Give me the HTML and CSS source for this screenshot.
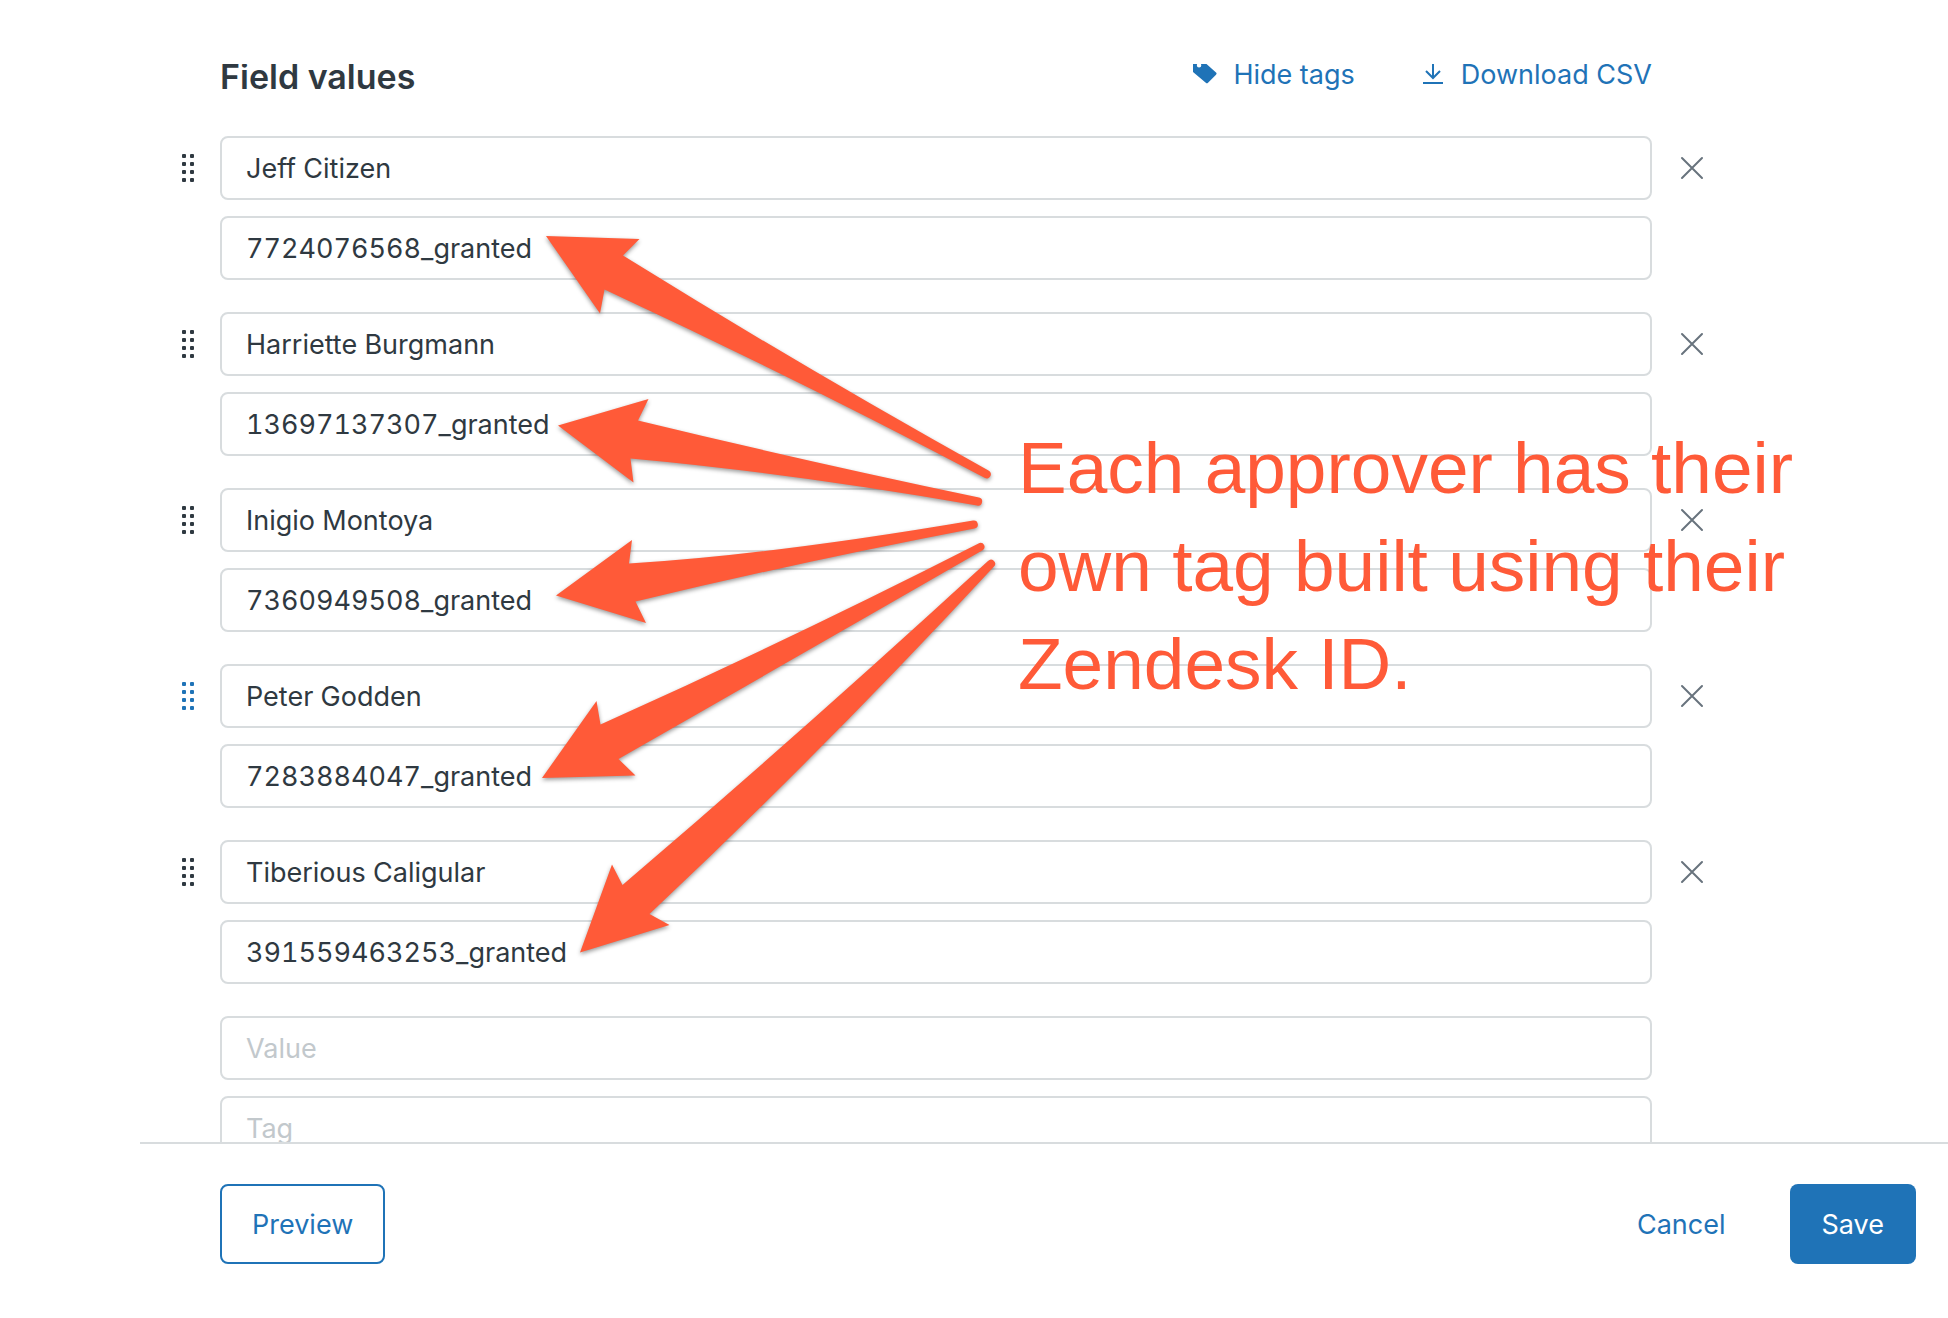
FILE: index.html
```html
<!DOCTYPE html>
<html lang="en">
<head>
    <meta charset="UTF-8">
    <meta name="viewport" content="width=device-width, initial-scale=1.0">
    <title>Field values</title>
    <link rel="stylesheet" href="styles.css">
</head>
<body>

    <!-- Shared icons -->
    <svg class="sprite" aria-hidden="true">
        <symbol id="grip" viewBox="0 0 12 28">
            <rect x="0" y="0" width="4" height="4" rx="1"/><rect x="8" y="0" width="4" height="4" rx="1"/>
            <rect x="0" y="8" width="4" height="4" rx="1"/><rect x="8" y="8" width="4" height="4" rx="1"/>
            <rect x="0" y="16" width="4" height="4" rx="1"/><rect x="8" y="16" width="4" height="4" rx="1"/>
            <rect x="0" y="24" width="4" height="4" rx="1"/><rect x="8" y="24" width="4" height="4" rx="1"/>
        </symbol>
        <symbol id="cross" viewBox="0 0 24 24">
            <path d="M2 2l20 20M22 2L2 22" fill="none" stroke="currentColor" stroke-width="2" stroke-linecap="round"/>
        </symbol>
    </svg>

    <main class="fields">
        <div class="fields-header">
            <h1>Field values</h1>
            <div class="actions">
                <a href="#">
                    <svg width="24" height="22" viewBox="0 0 24 22"><path fill="currentColor" fill-rule="evenodd" d="M0 0h13.500l9.500 8.500a1.500 1.500 0 0 1 0 2.200l-8 8a1.500 1.500 0 0 1-2.200 0L0 8zM6 -.8a2.200 2.200 0 1 0 .1 4.400 2.200 2.200 0 0 0-.1-4.400z"/></svg>
                    Hide tags
                </a>
                <a href="#">
                    <svg width="22" height="22" viewBox="0 0 22 22"><path fill="none" stroke="currentColor" stroke-width="2" d="M10 0v14M3 7l7 7 7-7M0 19h20"/></svg>
                    Download CSV
                </a>
            </div>
        </div>

        <div class="field">
            <button class="grip" aria-label="Reorder"><svg width="12" height="28"><use href="#grip"/></svg></button>
            <input type="text" aria-label="Value" value="Jeff Citizen">
            <button class="remove" aria-label="Remove"><svg width="24" height="24"><use href="#cross"/></svg></button>
            <input type="text" class="tag" aria-label="Tag" value="7724076568_granted">
        </div>

        <div class="field">
            <button class="grip" aria-label="Reorder"><svg width="12" height="28"><use href="#grip"/></svg></button>
            <input type="text" aria-label="Value" value="Harriette Burgmann">
            <button class="remove" aria-label="Remove"><svg width="24" height="24"><use href="#cross"/></svg></button>
            <input type="text" class="tag" aria-label="Tag" value="13697137307_granted">
        </div>

        <div class="field">
            <button class="grip" aria-label="Reorder"><svg width="12" height="28"><use href="#grip"/></svg></button>
            <input type="text" aria-label="Value" value="Inigio Montoya">
            <button class="remove" aria-label="Remove"><svg width="24" height="24"><use href="#cross"/></svg></button>
            <input type="text" class="tag" aria-label="Tag" value="7360949508_granted">
        </div>

        <div class="field">
            <button class="grip active" aria-label="Reorder"><svg width="12" height="28"><use href="#grip"/></svg></button>
            <input type="text" aria-label="Value" value="Peter Godden">
            <button class="remove" aria-label="Remove"><svg width="24" height="24"><use href="#cross"/></svg></button>
            <input type="text" class="tag" aria-label="Tag" value="7283884047_granted">
        </div>

        <div class="field">
            <button class="grip" aria-label="Reorder"><svg width="12" height="28"><use href="#grip"/></svg></button>
            <input type="text" aria-label="Value" value="Tiberious Caligular">
            <button class="remove" aria-label="Remove"><svg width="24" height="24"><use href="#cross"/></svg></button>
            <input type="text" class="tag" aria-label="Tag" value="391559463253_granted">
        </div>

        <div class="field">
            <input type="text" class="value" aria-label="Value" placeholder="Value">
            <input type="text" class="tag" aria-label="Tag" placeholder="Tag">
        </div>
    </main>

    <footer>
        <button class="btn btn-outline">Preview</button>
        <button class="btn btn-link">Cancel</button>
        <button class="btn btn-primary">Save</button>
    </footer>

    <!-- Callout over the form -->
    <svg class="arrows" width="500" height="760" viewBox="520 210 500 760" aria-hidden="true">
        <path d="M546 236L639.500 239L623 255.500Q806 369 988.500 470.500A4 4 0 0 1 985 478Q795 378 604.500 289.500L600 313.500Z"/>
        <path d="M558 425.500L648.500 399L638 420.500Q805 461 979 497.500A4 4 0 0 1 977 505.500Q790 473 630.500 458.500L633.500 482.500Z"/>
        <path d="M556 595.500L632 540L629 563.500Q770 555 973 520.500A4 4 0 0 1 974.500 528.500Q800 562 635.500 601.500L646 623Z"/>
        <path d="M542 778L596.500 701L600.500 724.500Q795 637 979.500 543A4 4 0 0 1 983 550Q802 654 618.500 759L635.500 775.500Z"/>
        <path d="M580 952.500L612 864.500L622.500 885Q805 729 988 561A4 4 0 0 1 994 566.500Q828 746 649.500 914L669.500 925Z"/>
    </svg>
    <p class="callout">Each approver has their<br>own tag built using their<br>Zendesk ID.</p>

</body>
</html>
```

FILE: styles.css
```css
* {
    box-sizing: border-box;
}

body {
    margin: 0;
    height: 100vh;
    display: flex;
    flex-direction: column;
    position: relative;
    overflow: hidden;
    background: #fff;
    color: #2f3941;
    font-family: Inter, "Liberation Sans", sans-serif;
    font-size: 27px;
}

.sprite {
    position: absolute;
    width: 0;
    height: 0;
}

button {
    font: inherit;
    padding: 0;
    border: none;
    background: none;
    cursor: pointer;
}

/* Scrolling list of values */
.fields {
    flex: 1;
    min-height: 0;
    margin-top: 64px;
    padding: 0 216px 0 140px;
    overflow: hidden;
}

.fields-header {
    display: flex;
    justify-content: space-between;
    height: 72px;
    padding: 0 80px;
}

h1 {
    margin: 0;
    font-size: 34px;
    font-weight: 600;
    line-height: 26px;
}

.actions {
    display: flex;
    gap: 68px;
    line-height: 22px;
}

.actions a {
    display: flex;
    gap: 16px;
    height: 22px;
    align-items: center;
    color: #1f73b7;
    text-decoration: none;
}

.field {
    display: grid;
    grid-template-columns: 80px 1fr 80px;
    row-gap: 16px;
    margin-bottom: 32px;
}

.field input {
    width: 100%;
    height: 64px;
    padding: 0 24px;
    border: 2px solid #d8dcde;
    border-radius: 8px;
    background: #fff;
    color: #2f3941;
    font: inherit;
    font-variant-numeric: tabular-nums;
}

.field input::placeholder {
    color: #c2c8cc;
}

.field .tag,
.field .value {
    grid-column: 2;
}

.grip,
.remove {
    display: flex;
    align-items: center;
    justify-content: center;
}

.grip {
    padding-left: 16px;
    fill: #2f3941;
}

.grip.active {
    fill: #1f73b7;
}

.remove {
    color: #68737d;
}

/* Bottom bar */
footer {
    display: flex;
    align-items: flex-start;
    height: 176px;
    margin-left: 140px;
    padding: 40px 32px 0 80px;
    border-top: 2px solid #d8dcde;
    background: #fff;
}

.btn {
    height: 80px;
    padding: 0 32px;
    border-radius: 8px;
    color: #1f73b7;
}

.btn-outline {
    padding: 0 30px;
    border: 2px solid #1f73b7;
}

.btn-link {
    margin-left: auto;
    margin-right: 32px;
}

.btn-primary {
    background: #1f73b7;
    color: #fff;
}

/* Callout */
.arrows {
    position: absolute;
    left: 520px;
    top: 210px;
    fill: #ff5a38;
    filter: drop-shadow(0 2px 2px rgba(0, 0, 0, 0.4));
    pointer-events: none;
}

.callout {
    position: absolute;
    left: 1018px;
    top: 419px;
    margin: 0;
    color: #ff5a38;
    font-family: "Liberation Sans", Arial, sans-serif;
    font-size: 73px;
    line-height: 98px;
    white-space: nowrap;
    pointer-events: none;
}
```
